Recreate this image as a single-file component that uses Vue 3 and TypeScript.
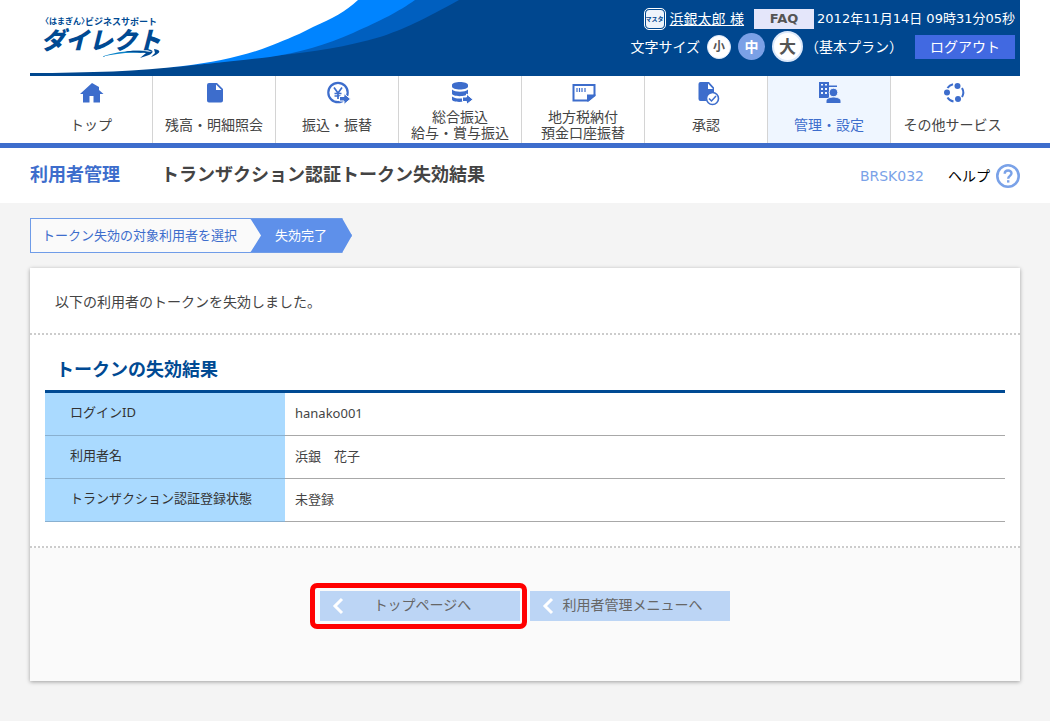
<script setup lang="ts">
interface NavItem {
  icon: string
  lines: string[]
  active?: boolean
}
interface ResultRow {
  label: string
  value: string
}

const navItems: NavItem[] = [
  { icon: 'home', lines: ['トップ'] },
  { icon: 'file', lines: ['残高・明細照会'] },
  { icon: 'yen', lines: ['振込・振替'] },
  { icon: 'coins', lines: ['総合振込', '給与・賞与振込'] },
  { icon: 'tax', lines: ['地方税納付', '預金口座振替'] },
  { icon: 'approve', lines: ['承認'] },
  { icon: 'admin', lines: ['管理・設定'], active: true },
  { icon: 'other', lines: ['その他サービス'] },
]

const rows: ResultRow[] = [
  { label: 'ログインID', value: 'hanako001' },
  { label: '利用者名', value: '浜銀　花子' },
  { label: 'トランザクション認証登録状態', value: '未登録' },
]
</script>

<template>
  <div class="page">
    <header class="header">
      <div class="brand">
        <svg class="wave" width="430" height="76" viewBox="0 0 430 76" aria-hidden="true">
          <path fill="#00478f" d="M0 0H430V76H0Z" />
          <path fill="#005fbf" d="M0 0H429C395 19 372 30 350 37C320 46 280 53 240 56L150 67L0 73Z" />
          <path fill="#0084ff" d="M0 0H385C368 12 352 20 323 33C296 45 268 53 240 57C205 61 180 64 150 66L0 73Z" />
          <path fill="#fff" d="M0 0H328C315 12 303 18 283 27C264 37 250 42 240 46C215 56 185 62 153 66C110 71 60 73 0 73Z" />
        </svg>
        <div class="logo">
          <div class="logo-top"><span class="logo-bank">〈はまぎん〉</span><span class="logo-sub">ビジネスサポート</span></div>
          <div class="logo-main">ダイレクト</div>
          <svg class="swoosh" width="60" height="12" viewBox="0 0 60 12" aria-hidden="true">
            <path fill="#0b84c9" d="M0 8C14 3 28 1 46 2L40 4C26 3 13 5 0 8Z" />
            <path fill="#004a93" d="M24 3C32 1 40 2 51 3L44 0C52 0 54 3 48 6L39 9L45 4C38 3 30 3 24 3ZM53 0C61 1 60 4 50 8L54 4Z" />
          </svg>
        </div>
      </div>
      <div class="tools">
        <div class="tool-row account">
          <span class="master">マスタ</span>
          <a class="user" href="#">浜銀太郎 様</a>
          <a class="faq" href="#">FAQ</a>
          <time class="clock">2012年11月14日 09時31分05秒</time>
        </div>
        <div class="tool-row sizing">
          <span class="size-label">文字サイズ</span>
          <button type="button" class="size small">小</button>
          <button type="button" class="size medium">中</button>
          <button type="button" class="size large">大</button>
          <span class="plan">（基本プラン）</span>
          <button type="button" class="logout">ログアウト</button>
        </div>
      </div>
    </header>

    <nav class="nav">
      <a v-for="item in navItems" :key="item.icon" href="#" class="nav-item" :class="{ active: item.active }">
        <svg width="28" height="28" viewBox="0 0 28 28" fill="none" aria-hidden="true">
          <path v-if="item.icon === 'home'" fill="currentColor" d="M15 4 3 15h3v8.500h6.500V17h4v6.500H23V15h3.500L22 11V8Z" />
          <path v-else-if="item.icon === 'file'" fill="currentColor" fill-rule="evenodd" d="M9 4h8l6 6v11.500a2 2 0 0 1-2 2H9a2 2 0 0 1-2-2V6a2 2 0 0 1 2-2Zm7 1.500V11h5.500Z" />
          <g v-else-if="item.icon === 'yen'">
            <circle cx="15" cy="13.500" r="9.700" stroke="currentColor" stroke-width="2.200" />
            <path d="M11 8.500l4 5.500 4-5.500M15 14v6M11.500 14.500h7M11.500 17h6" stroke="currentColor" stroke-width="1.700" />
            <path fill="currentColor" stroke="#fff" stroke-width="1" d="M16.500 17.500H21V14.500L27.500 20 21 25.500V22h-4.500Z" />
          </g>
          <g v-else-if="item.icon === 'coins'">
            <path fill="currentColor" d="M6 6c0-4 16-4 16 0v1.500c0 4-16 4-16 0ZM6 10.500c3 3 13 3 16 0v4c-1 3.500-16 3.500-16 0ZM6 17.500c3 2.500 10 3 16 0v4c-5 2-16 2-16-1Z" />
            <path fill="currentColor" stroke="#fff" stroke-width="1" d="M16.500 18H20.500V15L27 20.500 20.500 25.500V22.500h-4Z" />
          </g>
          <g v-else-if="item.icon === 'tax'">
            <path d="M4.500 6h21v10L19 21.500H4.500Z" stroke="currentColor" stroke-width="2" />
            <path fill="currentColor" d="M18 15.500h8.500V17L19.500 22.500H18Z" />
            <path d="M8 9v4M10.500 9v4M13 9v4M16 9v4" stroke="currentColor" stroke-width="1.200" />
          </g>
          <g v-else-if="item.icon === 'approve'">
            <path fill="currentColor" fill-rule="evenodd" d="M8.500 3H17l5 5.500V14a7 7 0 0 0-8 8H8.500a2 2 0 0 1-2-2V5a2 2 0 0 1 2-2ZM16 4.500V10h5Z" />
            <circle cx="20.500" cy="19.500" r="6" stroke="currentColor" stroke-width="1.600" />
            <path d="m17 19.500 2.500 2.500 4.500-5" stroke="currentColor" stroke-width="1.500" />
          </g>
          <g v-else-if="item.icon === 'admin'">
            <path fill="currentColor" fill-rule="evenodd" d="M4 3h10v3.500H22V8h-8v11H4ZM6 5v1.500h2V5ZM10 5v1.500h2V5ZM6 9v2h2V9ZM10 9v2h2V9ZM6 13v2h2v-2ZM10 13v2h2v-2Z" />
            <circle cx="18.500" cy="13.500" r="4.300" fill="currentColor" stroke="#eff6ff" stroke-width="1" />
            <path fill="currentColor" stroke="#eff6ff" stroke-width="1" d="M11 24.500v-2.500c0-2.500 4-4 7.500-4s7.500 1.500 7.500 4v2.500Z" />
          </g>
          <g v-else fill="currentColor">
            <circle cx="18.500" cy="7" r="3" />
            <circle cx="8" cy="13.500" r="3" />
            <circle cx="19" cy="20" r="3" />
            <path fill="none" stroke="currentColor" stroke-width="2" d="M14 5.200A9 9 0 0 0 8.500 9M8.500 18.500A9 9 0 0 0 14.500 22.500M23 9A9 9 0 0 1 23 18" />
          </g>
        </svg>
        <span class="nav-label"><span v-for="line in item.lines" :key="line" class="nav-line">{{ line }}</span></span>
      </a>
    </nav>

    <div class="title-bar">
      <span class="category">利用者管理</span>
      <h1>トランザクション認証トークン失効結果</h1>
      <span class="screen-id">BRSK032</span>
      <a class="help" href="#">
        ヘルプ
        <svg width="24" height="24" viewBox="0 0 24 24" fill="none" aria-hidden="true">
          <circle cx="12" cy="12" r="10.700" stroke="#7aa2e8" stroke-width="2.600" />
          <path d="M8.700 9.800c0-4.300 6.800-4.200 6.800-.5 0 2.500-3.300 2.600-3.300 5.400" stroke="#7aa2e8" stroke-width="2.400" />
          <path fill="#7aa2e8" d="M11 16.200h2.400v2.400H11z" />
        </svg>
      </a>
    </div>

    <main class="content">
      <ol class="steps">
        <li class="step">トークン失効の対象利用者を選択</li>
        <li class="step current" aria-current="step">失効完了</li>
      </ol>

      <section class="card">
        <p class="message">以下の利用者のトークンを失効しました。</p>
        <div class="result">
          <h2>トークンの失効結果</h2>
          <table>
            <tbody>
              <tr v-for="row in rows" :key="row.label">
                <th scope="row">{{ row.label }}</th>
                <td>{{ row.value }}</td>
              </tr>
            </tbody>
          </table>
        </div>
        <div class="actions">
          <button type="button" class="action marked">
            <svg class="chevron" width="12" height="18" viewBox="0 0 12 18" fill="none" aria-hidden="true"><path d="M10 2 3 9l7 7" stroke="#fff" stroke-width="3" /></svg>
            トップページへ
          </button>
          <button type="button" class="action">
            <svg class="chevron" width="12" height="18" viewBox="0 0 12 18" fill="none" aria-hidden="true"><path d="M10 2 3 9l7 7" stroke="#fff" stroke-width="3" /></svg>
            利用者管理メニューへ
          </button>
        </div>
      </section>
    </main>
  </div>
</template>

<style>
body {
  margin: 0;
  background: #f4f4f4;
}
</style>

<style scoped>
.page {
  color: #444;
  font-family: "DejaVu Sans", "Noto Sans CJK JP", sans-serif;
  font-size: 14px;
  line-height: 20px;
  background: linear-gradient(#fff, #fff) top / 100% 76px no-repeat;
}
button {
  padding: 0;
  border: 0;
  font: inherit;
  cursor: pointer;
}
a {
  color: inherit;
  text-decoration: none;
}
.header {
  display: flex;
  justify-content: space-between;
  height: 76px;
  margin: 0 30px;
  background: #00478f;
}
.brand {
  display: grid;
  flex: none;
}
.wave,
.logo {
  grid-area: 1 / 1;
}
.wave {
  display: block;
}
.logo {
  z-index: 1;
  padding: 17px 0 0 11px;
  color: #004a93;
  font-family: "Liberation Sans", "Noto Sans CJK JP", sans-serif;
  font-weight: 700;
}
.logo-top {
  display: flex;
  padding-left: 4px;
  font-size: 8px;
  line-height: 10px;
}
.logo-bank {
  font-feature-settings: "halt";
}
.logo-sub {
  font-size: 9px;
}
.logo-main {
  font-size: 24px;
  font-style: italic;
  font-weight: 900;
  line-height: 28px;
}
.swoosh {
  display: block;
  margin: -6px 0 0 60px;
}
.tools {
  display: flex;
  flex-direction: column;
  gap: 2px;
  padding: 9px 5px 0 0;
  color: #fff;
  white-space: nowrap;
}
.tool-row {
  display: flex;
  align-items: center;
  justify-content: flex-end;
}
.account {
  height: 20px;
}
.sizing {
  height: 31px;
}
.master {
  width: 18px;
  margin-right: 5px;
  border: 1px solid #00478f;
  border-radius: 4px;
  outline: 1px solid #fff;
  background: #eef4fb;
  color: #00478f;
  font-size: 6px;
  font-weight: 700;
  line-height: 18px;
  text-align: center;
}
.user {
  margin-right: 10px;
  text-decoration: underline;
}
.faq {
  width: 60px;
  margin-right: 3px;
  background: #e4e6fa;
  color: #555;
  font-size: 13px;
  font-weight: 700;
  text-align: center;
}
.clock {
  font-size: 13px;
}
.size {
  box-sizing: border-box;
  border-radius: 50%;
  background: #fff;
  color: #555;
  font-weight: 700;
}
.small {
  width: 24px;
  height: 24px;
  margin: 0 7px;
  border: 1px solid #dce9fb;
  font-size: 12px;
}
.medium {
  width: 27px;
  height: 27px;
  margin-right: 7px;
  background: #7aa0e6;
  color: #fff;
}
.large {
  width: 31px;
  height: 31px;
  margin-right: 2px;
  border: 2px solid #dce9fb;
  font-size: 17px;
}
.plan {
  margin-right: 12px;
}
.logout {
  width: 100px;
  height: 24px;
  background: #4169e1;
  color: #fff;
}
.nav {
  display: grid;
  grid-template-columns: repeat(8, 1fr);
  padding: 0 36px 0 30px;
  border-bottom: 5px solid #3d6dcc;
  background: #fff;
}
.nav-item {
  display: flex;
  flex-direction: column;
  align-items: center;
  height: 64px;
  padding-top: 3px;
  border-right: 1px solid #d4d4d4;
}
.nav-item:last-child {
  border-right: 0;
}
.nav-item svg {
  flex: none;
  color: #3d6dcc;
}
.nav-item.active {
  background: #eff6ff;
  color: #3d6dcc;
}
.nav-label {
  display: flex;
  flex: 1;
  flex-direction: column;
  justify-content: center;
  padding-bottom: 1px;
  line-height: 16px;
  white-space: nowrap;
  text-align: center;
}
.title-bar {
  display: flex;
  align-items: center;
  height: 55px;
  padding: 0 30px;
  background: #fff;
  color: #444;
}
.category,
h1 {
  margin: 0;
  padding-bottom: 2px;
  font-size: 18px;
  font-weight: 700;
  line-height: 24px;
}
.category {
  margin-right: 41px;
  color: #3d6dcc;
}
.screen-id {
  margin: 0 24px 0 auto;
  color: #7aa2e8;
}
.help {
  display: flex;
  align-items: center;
  gap: 6px;
  color: #000;
}
.content {
  padding: 15px 30px 40px;
}
.steps {
  display: flex;
  margin: 0 0 15px;
  padding: 0;
  font-size: 13px;
  line-height: 33px;
  list-style: none;
}
.step {
  padding: 0 24px 0 11px;
  border: 1px solid #6f9ce8;
  border-right: 0;
  background: #fafafa;
  color: #3d6dcc;
}
.step.current {
  margin-left: -11px;
  padding: 0 24px;
  border: 1px solid #6f9ce8;
  background: #5e90ea;
  color: #fff;
  clip-path: polygon(0 0, calc(100% - 10px) 0, 100% 50%, calc(100% - 10px) 100%, 0 100%, 11px 50%);
}
.card {
  background: #fff;
  box-shadow: 0 1px 4px rgba(0, 0, 0, 0.35);
}
.message {
  margin: 0;
  padding: 24px 25px 21px;
  border-bottom: 2px dotted #ccc;
}
.result {
  padding: 23px 15px 24px;
  border-bottom: 2px dotted #ccc;
}
h2 {
  margin: 0;
  padding: 0 11px 8px;
  border-bottom: 3px solid #004a93;
  color: #004a93;
  font-size: 18px;
  line-height: 24px;
}
table {
  width: 100%;
  border-spacing: 0;
  font-family: "Noto Sans", "Noto Sans CJK JP", sans-serif;
  font-size: 13px;
}
th,
td {
  box-sizing: border-box;
  height: 43px;
  padding: 0 10px 2px;
  border-bottom: 1px solid #a8a8a8;
  line-height: 20px;
  text-align: left;
}
th {
  width: 240px;
  padding: 0 25px 4px;
  border-bottom-color: #89b0d0;
  background: #aadaff;
  color: #333;
  font-weight: 400;
  white-space: nowrap;
}
.actions {
  display: flex;
  gap: 10px;
  justify-content: center;
  padding: 43px 0 60px;
  background: #fafafa;
}
.action {
  position: relative;
  width: 200px;
  height: 30px;
  padding: 0 0 2px 5px;
  background: #bcd5f5;
  color: #666;
}
.chevron {
  position: absolute;
  top: 6px;
  left: 12px;
}
.marked::after {
  position: absolute;
  inset: -8px -7px -8px -10px;
  border: 5px solid #f00;
  border-radius: 7px;
  content: "";
}
</style>
